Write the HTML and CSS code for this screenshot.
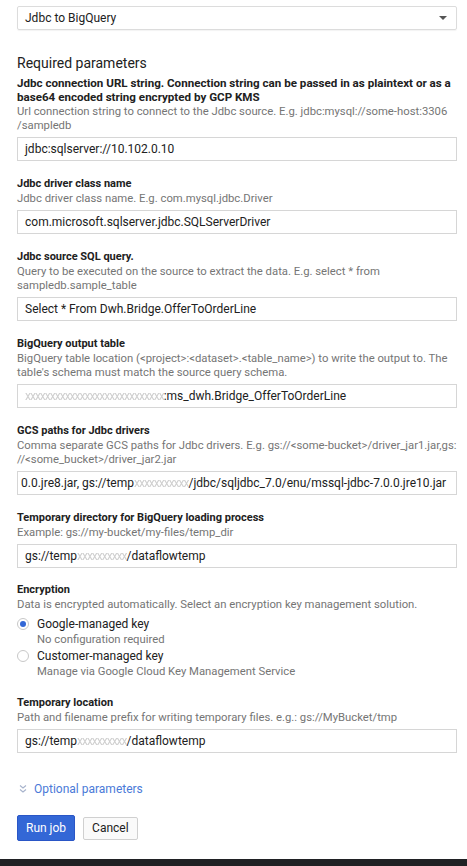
FILE: index.html
```html
<!DOCTYPE html>
<html>
<head>
<meta charset="utf-8">
<link rel="stylesheet" href="styles.css">
</head>
<body>
<div class="page">
  <div class="select">
    <span>Jdbc to BigQuery</span>
    <span class="arrow"></span>
  </div>

  <h2 class="section-title">Required parameters</h2>

  <div class="field">
    <div class="label wide">Jdbc connection URL string. Connection string can be passed in as plaintext or as a base64 encoded string encrypted by GCP KMS</div>
    <div class="desc">Url connection string to connect to the Jdbc source. E.g. jdbc:mysql://some-host:3306 /sampledb</div>
    <div class="input">jdbc:sqlserver://10.102.0.10</div>
  </div>

  <div class="field">
    <div class="label">Jdbc driver class name</div>
    <div class="desc">Jdbc driver class name. E.g. com.mysql.jdbc.Driver</div>
    <div class="input">com.microsoft.sqlserver.jdbc.SQLServerDriver</div>
  </div>

  <div class="field">
    <div class="label">Jdbc source SQL query.</div>
    <div class="desc">Query to be executed on the source to extract the data. E.g. select * from sampledb.sample_table</div>
    <div class="input">Select * From Dwh.Bridge.OfferToOrderLine</div>
  </div>

  <div class="field">
    <div class="label">BigQuery output table</div>
    <div class="desc">BigQuery table location (&lt;project&gt;:&lt;dataset&gt;.&lt;table_name&gt;) to write the output to. The table's schema must match the source query schema.</div>
    <div class="input"><span class="blur">xxxxxxxxxxxxxxxxxxxxxxxxxxxx</span>:ms_dwh.Bridge_OfferToOrderLine</div>
  </div>

  <div class="field">
    <div class="label">GCS paths for Jdbc drivers</div>
    <div class="desc">Comma separate GCS paths for Jdbc drivers. E.g. gs://&lt;some-bucket&gt;/driver_jar1.jar,gs: //&lt;some_bucket&gt;/driver_jar2.jar</div>
    <div class="input clip">0.0.jre8.jar, gs://temp<span class="blur">xxxxxxxxxxx</span>/jdbc/sqljdbc_7.0/enu/mssql-jdbc-7.0.0.jre10.jar</div>
  </div>

  <div class="field">
    <div class="label">Temporary directory for BigQuery loading process</div>
    <div class="desc">Example: gs://my-bucket/my-files/temp_dir</div>
    <div class="input">gs://temp<span class="blur">xxxxxxxxxx</span>/dataflowtemp</div>
  </div>

  <div class="field enc">
    <div class="label">Encryption</div>
    <div class="desc">Data is encrypted automatically. Select an encryption key management solution.</div>
    <div class="radio-row">
      <span class="radio checked"></span>
      <div>
        <div class="radio-label">Google-managed key</div>
        <div class="radio-sub">No configuration required</div>
      </div>
    </div>
    <div class="radio-row">
      <span class="radio"></span>
      <div>
        <div class="radio-label">Customer-managed key</div>
        <div class="radio-sub">Manage via Google Cloud Key Management Service</div>
      </div>
    </div>
  </div>

  <div class="field">
    <div class="label">Temporary location</div>
    <div class="desc">Path and filename prefix for writing temporary files. e.g.: gs://MyBucket/tmp</div>
    <div class="input">gs://temp<span class="blur">xxxxxxxxxx</span>/dataflowtemp</div>
  </div>

  <div class="optional">
    <svg width="8" height="10" viewBox="0 0 8 10"><path d="M1 1.5 L4 4 L7 1.5 M1 5.5 L4 8 L7 5.5" fill="none" stroke="#a7b3cc" stroke-width="1.1"/></svg>
    <span>Optional parameters</span>
  </div>

  <div class="buttons">
    <button class="btn primary">Run job</button>
    <button class="btn">Cancel</button>
  </div>
</div>
<div class="bottom-bar"></div>
</body>
</html>
```

FILE: styles.css
```css
html, body {
  margin: 0;
  padding: 0;
  background: #fff;
}
body {
  font-family: Roboto, "Liberation Sans", Arial, sans-serif;
  color: #212121;
  height: 866px;
  display: flex;
  flex-direction: column;
}
.page {
  flex: 1;
  padding: 6px 10px 0 17px;
}
.select {
  height: 22px;
  border: 1px solid #dcdcdc;
  border-radius: 2px;
  display: flex;
  align-items: center;
  justify-content: space-between;
  padding: 0 9px 0 7px;
  font-size: 12px;
  color: #212121;
  box-shadow: 0 1px 1px rgba(0,0,0,0.05);
}
.arrow {
  width: 0;
  height: 0;
  border-left: 4px solid transparent;
  border-right: 4px solid transparent;
  border-top: 4px solid #555;
}
.section-title {
  font-size: 14px;
  font-weight: 400;
  margin: 24px 0 5px;
  color: #212121;
  line-height: 18px;
}
.field {
  margin-bottom: 16px;
}
.label {
  font-size: 11px;
  font-weight: 700;
  line-height: 14px;
  color: #212121;
}
.label.wide {
  font-size: 11.6px;
  line-height: 13.5px;
}
.desc {
  font-size: 11.3px;
  line-height: 14px;
  color: #757575;
  margin: 1px 0 4px;
}
.input {
  height: 22px;
  border: 1px solid #d6d6d6;
  font-size: 12px;
  line-height: 22px;
  padding: 0 7px;
  color: #212121;
  white-space: nowrap;
  overflow: hidden;
}
.input.clip {
  padding-left: 3px;
}
.blur {
  color: #cfcfcf;
  letter-spacing: -1px;
  filter: blur(0.7px);
}
.enc {
  margin-top: -1px;
}
.enc .desc {
  margin-bottom: 4px;
}
.radio-row {
  display: flex;
  align-items: flex-start;
  gap: 8px;
}
.radio {
  width: 10px;
  height: 10px;
  border: 1px solid #c8c8c8;
  border-radius: 50%;
  margin-top: 2px;
  flex: none;
  position: relative;
  background: #fff;
}
.radio.checked::after {
  content: "";
  position: absolute;
  left: 2px;
  top: 2px;
  width: 6px;
  height: 6px;
  border-radius: 50%;
  background: #3367d6;
}
.radio-label {
  font-size: 12px;
  line-height: 16px;
  color: #212121;
}
.radio-sub {
  font-size: 11.3px;
  line-height: 16px;
  color: #757575;
}
.optional {
  display: flex;
  align-items: center;
  gap: 7px;
  margin: 27px 0 0 2px;
  font-size: 12px;
  color: #4a7ad8;
  height: 18px;
}
.buttons {
  display: flex;
  align-items: center;
  gap: 8px;
  margin-top: 17px;
}
.btn {
  font-family: Roboto, "Liberation Sans", Arial, sans-serif;
  font-size: 12px;
  padding: 0 8px;
  border: 1px solid #d0d0d0;
  border-radius: 2px;
  background: #fafafa;
  color: #212121;
  height: 23px;
}
.btn.primary {
  height: 26px;
  background: #3367d6;
  border-color: #2a56c6;
  color: #fff;
}
.bottom-bar {
  height: 7px;
  background: #202124;
}
```
